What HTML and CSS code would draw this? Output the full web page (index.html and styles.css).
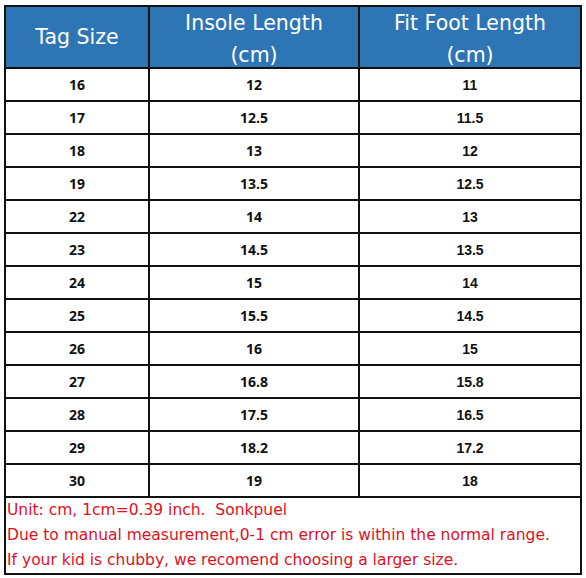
FILE: index.html
```html
<!DOCTYPE html>
<html>
<head>
<meta charset="utf-8">
<link rel="stylesheet" href="styles.css">
</head>
<body>
<div class="page">
<table class="size">
  <colgroup><col class="c1"><col class="c2"><col class="c3"></colgroup>
  <thead>
    <tr class="head">
      <th>Tag Size</th>
      <th class="two"><span class="l1">Insole Length</span><span class="l2">(cm)</span></th>
      <th class="two"><span class="l1">Fit Foot Length</span><span class="l2">(cm)</span></th>
    </tr>
  </thead>
  <tbody>
    <tr><td class="a">16</td><td class="a">12</td><td class="b">11</td></tr>
    <tr><td class="a">17</td><td class="a">12.5</td><td class="b">11.5</td></tr>
    <tr><td class="a">18</td><td class="a">13</td><td class="b">12</td></tr>
    <tr><td class="a">19</td><td class="a">13.5</td><td class="b">12.5</td></tr>
    <tr><td class="a">22</td><td class="a">14</td><td class="b">13</td></tr>
    <tr><td class="a">23</td><td class="a">14.5</td><td class="b">13.5</td></tr>
    <tr><td class="a">24</td><td class="a">15</td><td class="b">14</td></tr>
    <tr><td class="a">25</td><td class="a">15.5</td><td class="b">14.5</td></tr>
    <tr><td class="a">26</td><td class="a">16</td><td class="b">15</td></tr>
    <tr><td class="a">27</td><td class="a">16.8</td><td class="b">15.8</td></tr>
    <tr><td class="a">28</td><td class="a">17.5</td><td class="b">16.5</td></tr>
    <tr><td class="a">29</td><td class="a">18.2</td><td class="b">17.2</td></tr>
    <tr><td class="a">30</td><td class="a">19</td><td class="b">18</td></tr>
    <tr class="note">
      <td colspan="3">
        <div>Unit: cm, 1cm=0.39 inch.&nbsp; Sonkpuel</div>
        <div>Due to manual measurement,0-1 cm error is within the normal range.</div>
        <div>If your kid is chubby, we recomend choosing a larger size.</div>
      </td>
    </tr>
  </tbody>
</table>
</div>
</body>
</html>
```
FILE: styles.css
```css
html, body {
  margin: 0;
  padding: 0;
  background: #ffffff;
}
.page {
  padding: 5px 0 0 4px;
}
.size {
  border-collapse: collapse;
  width: 576px;
  table-layout: fixed;
}
.c1 { width: 144px; }
.c2 { width: 210px; }
.c3 { width: 222px; }
.size th, .size td {
  border: 2px solid #111111;
  padding: 0;
  text-align: center;
}
.size .head th {
  background: #2e75b6;
  color: #ffffff;
  font-family: "DejaVu Sans", sans-serif;
  font-weight: normal;
  font-size: 20.5px;
  line-height: 30px;
  height: 60px;
  vertical-align: middle;
}
.size .head th.two {
  vertical-align: top;
}
.l1, .l2 {
  display: block;
  height: 30px;
  white-space: nowrap;
}
.l1 { line-height: 32px; }
.l2 { line-height: 36px; }
.size tbody td {
  height: 31px;
  font-size: 14px;
  color: #111111;
}
.a {
  font-family: "Open Sans", sans-serif;
  font-weight: 700;
}
.b {
  font-family: "Liberation Sans", sans-serif;
  font-weight: 700;
}
.size .note td {
  height: 73px;
  text-align: left;
  padding: 0 0 0 1px;
  color: #e0101e;
  font-family: "DejaVu Sans", sans-serif;
  font-size: 15.5px;
  line-height: 25px;
  vertical-align: top;
  white-space: nowrap;
}
```
